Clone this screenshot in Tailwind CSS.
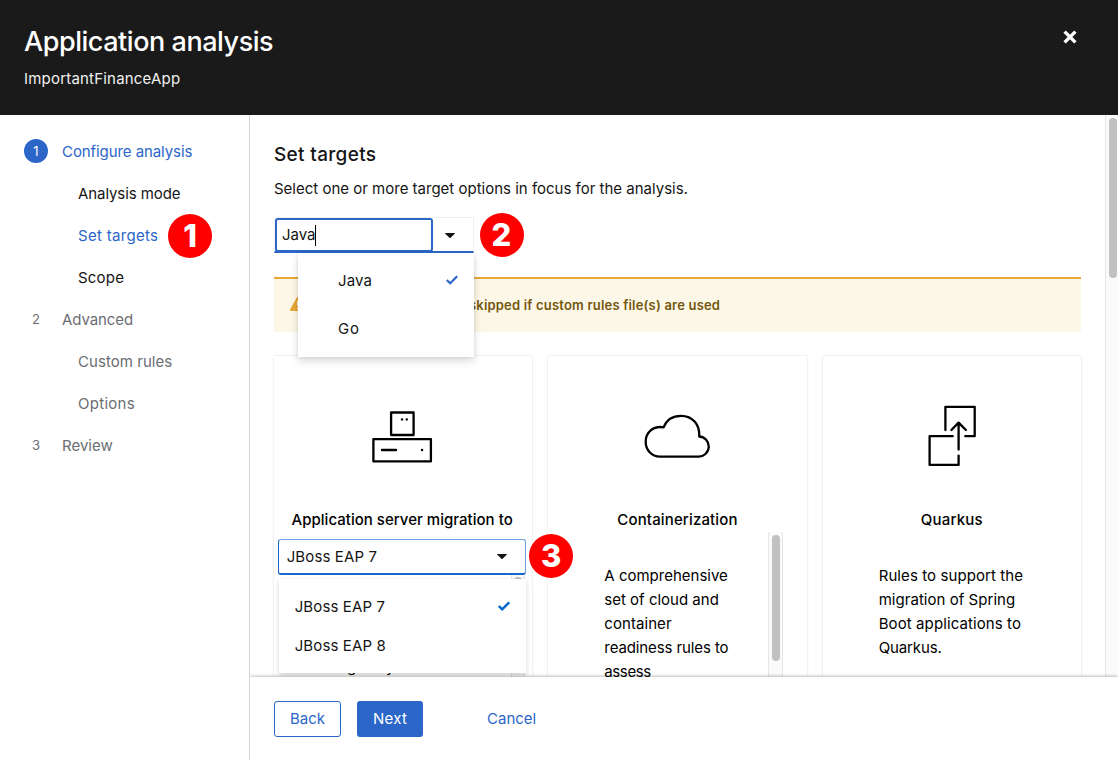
<!DOCTYPE html>
<html lang="en">
<head>
<meta charset="utf-8">
<title>Application analysis</title>
<script src="https://cdn.jsdelivr.net/npm/@tailwindcss/browser@4"></script>
</head>
<body class="w-[1118px] h-[760px] overflow-hidden bg-white font-[Inter,sans-serif] text-[15px] leading-6 text-[#151515] whitespace-nowrap flex flex-col">
<header class="h-[115px] shrink-0 bg-[#1a1a1a] text-white flex justify-between pt-[23px] pl-6 pr-[41px]">
  <div>
    <h1 class="text-[27px] leading-[38px] font-medium tracking-[-0.46px]">Application analysis</h1>
    <p class="mt-[6px] text-[#f0f0f0] tracking-[0.2px]">ImportantFinanceApp</p>
  </div>
  <svg class="mt-[7px] w-[14px] h-[14px]" viewBox="0 0 14 14" fill="none" stroke="#fff" stroke-width="3.4"><path d="M1.6 1.6 12.4 12.4M12.4 1.6 1.6 12.4"/></svg>
</header>
<div class="flex flex-1 min-h-0">
  <nav class="w-[250px] shrink-0 border-r border-[#d2d2d2] pt-[24.5px] flex flex-col gap-[18px] text-[#6a6e73]">
    <div class="flex items-center pl-6 text-[#2b66c8]"><span class="-mt-px w-6 h-6 rounded-full bg-[#2b66c8] text-white text-[13px] text-center mr-[14px]">1</span><span class="tracking-[-0.08px]">Configure analysis</span></div>
    <div class="pl-[78px] text-[#151515] tracking-[-0.08px]">Analysis mode</div>
    <div class="pl-[78px] text-[#2b66c8] relative"><span class="tracking-[0.3px]">Set targets</span>
      <b class="absolute left-[168px] top-[-9.5px] w-11 h-11 rounded-full bg-[#fe0000] text-white text-[31px] leading-[44px] font-extrabold text-center">1</b></div>
    <div class="pl-[78px] text-[#151515] tracking-[0.2px]">Scope</div>
    <div class="flex items-center pl-6"><span class="-mt-px w-6 text-[13px] text-center mr-[14px]">2</span><span class="tracking-[-0.08px]">Advanced</span></div>
    <div class="pl-[78px] tracking-[0.05px]">Custom rules</div>
    <div class="pl-[78px] tracking-[0.28px]">Options</div>
    <div class="flex items-center pl-6"><span class="-mt-px w-6 text-[13px] text-center mr-[14px]">3</span><span>Review</span></div>
  </nav>
  <div class="flex-1 min-w-0 flex flex-col">
    <div class="h-[562px] shrink-0 flex overflow-hidden">
      <main class="w-[855px] shrink-0 pl-6 pr-6 pt-[27px]">
        <h2 class="text-[19px] leading-[26px] font-medium tracking-[0.33px]">Set targets</h2>
        <p class="mt-[9px]">Select one or more target options in focus for the analysis.</p>
        <div class="relative mt-[16px] w-[200px] h-9 border border-[#f0f0f0] border-b-2 border-b-[#2b66c8] flex">
          <div class="w-[158px] h-[34px] shrink-0 border-2 border-[#2b66c8] rounded-[3px] bg-white pl-[5px] flex items-center"><span>Java</span><i class="-ml-px w-px h-[21px] bg-black"></i></div>
          <svg class="ml-[12px] mt-[15px] w-[10px] h-[5px]" viewBox="0 0 10 5"><path d="M.6 0h8.8q.9.1.3.7L5.6 4.7q-.6.5-1.2 0L.3.7Q-.2.1.6 0Z" fill="#151515"/></svg>
          <div class="absolute z-20 left-[23px] top-[35px] w-[176px] h-[104px] bg-white shadow-[0_4px_8px_rgba(3,3,3,0.14),0_0_4px_rgba(3,3,3,0.08)] pt-4 pl-10 flex flex-col gap-6">
            <div class="flex items-center justify-between pr-4"><span class="tracking-[0.15px]">Java</span><svg class="-mt-[2px] w-3 h-[10px]" viewBox="0 0 12 10" fill="none" stroke="#2b66c8" stroke-width="2.2"><path d="M.8 5 4.2 8.3 11.2 1.3"/></svg></div>
            <div class="tracking-[0.9px]">Go</div>
          </div>
          <b class="absolute z-20 left-[204.5px] top-[-5px] w-11 h-11 rounded-full bg-[#fe0000] text-white text-[31px] leading-[44px] font-extrabold text-center">2</b>
        </div>
        <div class="mt-6 h-[55px] bg-[#fdf7e7] border-t-2 border-[#e8a736] flex items-center pb-[2px] pl-4 text-[#73560c] text-[13px] font-semibold">
          <svg class="-mt-[2px] w-4 h-[14px] mr-[163px] shrink-0" viewBox="0 0 16 14"><path d="M6.7.8Q8-.8 9.3.8L15.8 12Q16.3 14 14.6 14H1.4Q-.3 14 .2 12Z" fill="#e8a736"/><path d="M8 4v5M8 10.5v2" stroke="#fff" stroke-width="1.8"/></svg>
          <span class="tracking-[0.19px]">skipped if custom rules file(s) are used</span>
        </div>
        <div class="mt-6 grid grid-cols-3 gap-4 text-black">
          <section class="relative h-[340px] shadow-[0_0_2px_rgba(3,3,3,0.16)] flex flex-col items-center pt-[50px]">
            <svg class="-ml-[2px] w-[66px] h-[66px]" viewBox="369 406 66 66" fill="none" stroke="#000" stroke-width="2.3" stroke-linejoin="round"><path d="M391.1 412.5h22.5v22.5h-22.5zM373.4 439.1h57.5v22.3h-57.5z"/><path d="M382 450h14M422 450h.1M402 419.4h.1M406.7 419.4h.1" stroke-linecap="round" stroke-width="2.4"/></svg>
            <h3 class="mt-[35.5px] -ml-[2px] font-medium tracking-[0.02px]">Application server migration to</h3>
            <div class="absolute left-[237px] top-[219px] h-[121px] w-[14px] bg-[#fafafa] border-x border-[#e6e6e6] pt-[2px] pl-[2px]"><div class="w-2 h-[60px] rounded-full bg-[#c1c1c1]"></div></div>
            <div class="relative z-10 mt-[7px] -ml-[3px] w-[248px] h-[36px] bg-white border border-[#6c9fdd] border-l-[#1767cb] border-b-2 border-b-[#1767cb] rounded-[3px] pl-2 pr-[18px] flex items-center justify-between text-[#151515]"><span class="pt-[2px] tracking-[0.12px]">JBoss EAP 7</span><svg class="mt-px w-[10px] h-[5px]" viewBox="0 0 10 5"><path d="M.6 0h8.8q.9.1.3.7L5.6 4.7q-.6.5-1.2 0L.3.7Q-.2.1.6 0Z" fill="#151515"/></svg>
              <div class="absolute left-0 top-[39px] w-[247px] h-[94.5px] bg-white shadow-[0_2px_5px_rgba(3,3,3,0.18)] pt-4 pl-4 pr-4 flex flex-col gap-[15.5px]">
                <div class="flex items-center justify-between"><span class="tracking-[0.12px]">JBoss EAP 7</span><svg class="-mt-[2px] w-3 h-[10px]" viewBox="0 0 12 10" fill="none" stroke="#0066cc" stroke-width="2.4"><path d="M.8 5 4.2 8.3 11.2 1.3"/></svg></div>
                <div class="tracking-[0.12px]">JBoss EAP 8</div>
              </div>
              <b class="absolute left-[250.5px] top-[-6px] w-11 h-11 rounded-full bg-[#fe0000] text-white text-[31px] leading-[44px] font-extrabold text-center">3</b>
            </div>
            <p class="absolute left-[55px] top-[299px]">edges by</p>
          </section>
          <section class="h-[340px] shadow-[0_0_2px_rgba(3,3,3,0.16)] flex flex-col items-center pt-[50px]">
            <svg class="-ml-[1px] w-[66px] h-[66px]" viewBox="644 406 66 66" fill="none" stroke="#000" stroke-width="2.3" stroke-linejoin="round"><path d="M660 456.6H698.2A9.9 9.9 0 0 0 699.2 436.5C699.9 425 693 415.8 681 415.8 673 415.8 666.5 420 663.6 427.3 653 425.5 645.7 432.5 645.7 441.7 645.7 450 651.5 456.6 660 456.6Z"/></svg>
            <h3 class="mt-[36px] font-medium tracking-[0.14px]">Containerization</h3>
            <div class="self-stretch flex justify-between flex-1 ml-14 mr-6">
              <p class="pt-[32px]">A comprehensive<br>set of cloud and<br><span class="tracking-[0.06px]">container</span><br><span class="tracking-[-0.1px]">readiness rules to</span><br><span class="tracking-[-0.4px]">assess</span></p>
              <div class="w-[15px] bg-[#fafafa] border-x border-[#e6e6e6] pt-[3px] pl-[3px]"><div class="w-2 h-[126px] rounded-full bg-[#c1c1c1]"></div></div>
            </div>
          </section>
          <section class="h-[340px] shadow-[0_0_2px_rgba(3,3,3,0.16)] flex flex-col items-center pt-[50px]">
            <svg class="w-[66px] h-[66px]" viewBox="919 406 66 66" fill="none" stroke="#000" stroke-width="2.3" stroke-linejoin="round" stroke-linecap="round" overflow="visible"><path d="M945.4 430V406.8H974.7V436.2H965.3M952.7 436.2H929.6V464.9H958.6V455.6M958.6 449.6V422.8M951.4 430 958.6 422.6 965.9 430"/></svg>
            <h3 class="mt-[36px] font-medium tracking-[0.22px]">Quarkus</h3>
            <p class="self-start ml-14 mt-[32px]"><span class="tracking-[0.09px]">Rules to support the</span><br><span class="tracking-[0.04px]">migration of Spring</span><br><span class="tracking-[0.1px]">Boot applications to</span><br><span class="tracking-[-0.12px]">Quarkus.</span></p>
          </section>
        </div>
      </main>
      <div class="w-[13px] bg-[#fafafa] border-l border-[#e6e6e6] pt-[3px] pl-[3px]"><div class="w-2 h-[160px] rounded-full bg-[#c1c1c1]"></div></div>
    </div>
    <footer class="relative z-30 flex-1 bg-white shadow-[0_-1px_3px_rgba(3,3,3,0.25)] [clip-path:inset(-5px_0_0_0)] pt-6 pl-6 flex items-start text-[#2b66c8]">
      <button class="w-[67px] h-9 border border-[#2b66c8] rounded-[3px]">Back</button>
      <button class="ml-4 w-[66px] h-9 bg-[#2b66c8] text-white rounded-[3px] tracking-[0.25px]">Next</button>
      <button class="ml-16 h-9">Cancel</button>
    </footer>
  </div>
</div>
</body>
</html>
